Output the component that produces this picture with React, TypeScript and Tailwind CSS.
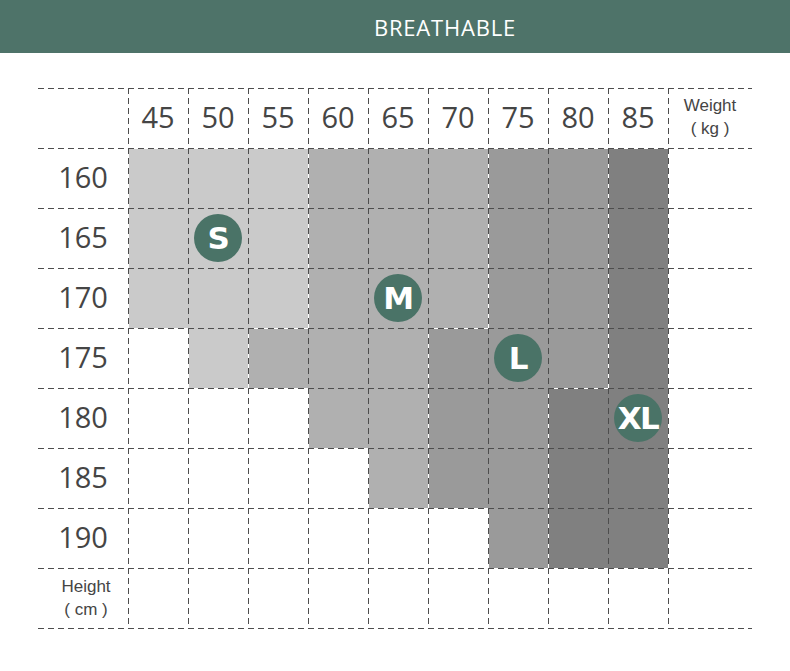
import React from "react";

const weights = [45, 50, 55, 60, 65, 70, 75, 80, 85];
const heights = [160, 165, 170, 175, 180, 185, 190];

// 0 white, 1 light, 2 medium, 3 dark, 4 darkest
const shades = [
  [1, 1, 1, 2, 2, 2, 3, 3, 4],
  [1, 1, 1, 2, 2, 2, 3, 3, 4],
  [1, 1, 1, 2, 2, 2, 3, 3, 4],
  [0, 1, 2, 2, 2, 3, 3, 3, 4],
  [0, 0, 0, 2, 2, 3, 3, 4, 4],
  [0, 0, 0, 0, 2, 3, 3, 4, 4],
  [0, 0, 0, 0, 0, 0, 3, 4, 4],
];

const shadeBg = ["bg-white", "bg-[#cacaca]", "bg-[#b0b0b0]", "bg-[#9a9a9a]", "bg-[#808080]"];

const badges: Record<string, string> = { "1-1": "S", "2-4": "M", "3-6": "L", "4-8": "XL" };

const topDark =
  "[background-image:linear-gradient(to_right,#4d4d4d_6px,transparent_6px)] [background-size:10px_1px] bg-repeat-x";
const topMixed =
  "[background-image:linear-gradient(to_right,#4d4d4d_6px,#fff_6px)] [background-size:10px_1px] bg-repeat-x";
const leftDark =
  "[background-image:linear-gradient(to_bottom,#4d4d4d_6px,transparent_6px)] [background-size:1px_10px] bg-repeat-y";
const leftMixed =
  "[background-image:linear-gradient(to_bottom,#4d4d4d_6px,#fff_6px)] [background-size:1px_10px] bg-repeat-y";

function Cell({
  bg = "bg-white",
  top = topDark,
  left,
  children,
}: {
  bg?: string;
  top?: string;
  left?: string;
  children?: React.ReactNode;
}) {
  return (
    <div className={`h-[60px] ${bg} ${top}`}>
      <div className={`h-full w-full flex flex-col items-center justify-center ${left ?? ""}`}>
        {children}
      </div>
    </div>
  );
}

function Badge({ label }: { label: string }) {
  return (
    <div className="w-[48px] h-[48px] rounded-full bg-[#4a7367] flex items-center justify-center">
      <span className="text-white font-bold text-[31px] leading-none tracking-[-1.5px] font-['DejaVu_Sans',sans-serif] mt-[1px]">
        {label}
      </span>
    </div>
  );
}

export default function App() {
  return (
    <div className="w-[790px] h-[671px] bg-white font-['Open_Sans',sans-serif] text-[#454545]">
      <div className="h-[53px] bg-[#4e7369] flex items-center justify-center pl-[100px]">
        <span className="text-white text-[22px] tracking-[0.8px] leading-none">BREATHABLE</span>
      </div>

      <div className="ml-[38px] mt-[35px] w-[714px] pb-px [background-image:linear-gradient(to_right,#4d4d4d_6px,transparent_6px)] [background-size:10px_1px] bg-repeat-x [background-position:0_100%]">
        <div className="grid grid-cols-[90px_repeat(9,60px)_84px]">
          {/* weight header */}
          <Cell />
          {weights.map((w) => (
            <Cell key={w} left={leftDark}>
              <span className="text-[29px] leading-none -mt-[3px]">{w}</span>
            </Cell>
          ))}
          <Cell left={leftDark}>
            <span className="font-['Liberation_Sans',sans-serif] text-[17px] leading-[23px] text-center -mt-[2px]">
              Weight
              <br />( kg )
            </span>
          </Cell>

          {heights.map((h, r) => (
            <React.Fragment key={h}>
              <Cell>
                <span className="text-[29px] leading-none -mt-[3px]">{h}</span>
              </Cell>
              {weights.map((w, c) => {
                const s = shades[r][c];
                const t = r === 0 ? 0 : shades[r - 1][c];
                const l = c === 0 ? 0 : shades[r][c - 1];
                const badge = badges[`${r}-${c}`];
                return (
                  <Cell
                    key={w}
                    bg={shadeBg[s]}
                    top={s > 0 && t !== s ? topMixed : topDark}
                    left={s > 0 && l !== s ? leftMixed : leftDark}
                  >
                    {badge && <Badge label={badge} />}
                  </Cell>
                );
              })}
              <Cell left={leftDark} />
            </React.Fragment>
          ))}

          {/* height label row */}
          <Cell>
            <span className="font-['Liberation_Sans',sans-serif] text-[17px] leading-[23px] text-center pl-[6px]">
              Height
              <br />( cm )
            </span>
          </Cell>
          {weights.map((w) => (
            <Cell key={w} left={leftDark} />
          ))}
          <Cell left={leftDark} />
        </div>
      </div>
    </div>
  );
}
